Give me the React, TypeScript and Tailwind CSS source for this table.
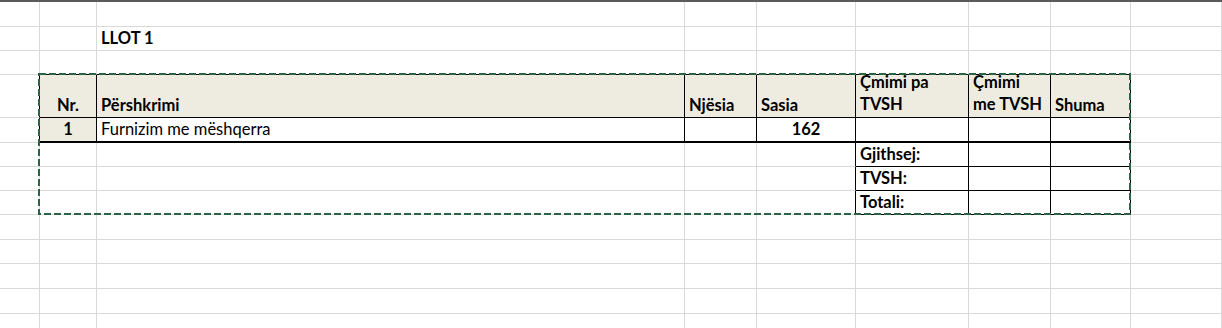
import React from "react";

// Column widths of the sheet (A..I); the last column fills the rest.
const COLS = [40, 57, 588, 72, 99, 113, 82, 80];
// Row heights below the dark strip at the top.
const ROWS = [25, 24, 24, 43, 25, 24, 24, 24, 25, 24, 25, 25, 25];

type Cell = { text?: React.ReactNode; bold?: boolean; align?: "left" | "center" | "right" };

const content: Record<string, Cell> = {
  "1-2": { text: "LLOT 1", bold: true },
  "3-1": { text: "Nr.", bold: true, align: "center" },
  "3-2": { text: "Përshkrimi", bold: true },
  "3-3": { text: "Njësia", bold: true },
  "3-4": { text: "Sasia", bold: true },
  "3-5": {
    text: (
      <span className="flex flex-col leading-[22px]">
        <span>Çmimi pa</span>
        <span>TVSH</span>
      </span>
    ),
    bold: true,
  },
  "3-6": {
    text: (
      <span className="flex flex-col leading-[22px]">
        <span>Çmimi</span>
        <span>me TVSH</span>
      </span>
    ),
    bold: true,
  },
  "3-7": { text: "Shuma", bold: true },
  "4-1": { text: "1", bold: true, align: "center" },
  "4-2": { text: "Furnizim me mëshqerra" },
  "4-4": { text: "162", bold: true, align: "center" },
  "5-5": { text: "Gjithsej:", bold: true },
  "6-5": { text: "TVSH:", bold: true },
  "7-5": { text: "Totali:", bold: true },
};

function rightBorder(r: number, c: number) {
  if ((r === 3 || r === 4) && c >= 0 && c <= 7) return "border-r-black";
  if (r >= 5 && r <= 7 && c >= 4 && c <= 7) return "border-r-black";
  return "border-r-[#d9d9d9]";
}

function bottomBorder(r: number, c: number) {
  if (r === 4 && c >= 1 && c <= 7) return "border-b-2 border-b-black";
  if ((r === 2 || r === 3) && c >= 1 && c <= 7) return "border-b border-b-black";
  if (r >= 5 && r <= 7 && c >= 5 && c <= 7) return "border-b border-b-black";
  return "border-b border-b-[#d9d9d9]";
}

function fill(r: number, c: number) {
  if (r === 3 && c >= 1 && c <= 7) return "bg-[#eeece1]";
  if (r === 4 && c === 1) return "bg-[#eeece1]";
  return "bg-white";
}

export default function App() {
  return (
    <div
      className="relative h-[328px] w-[1222px] overflow-hidden bg-white text-[16.5px] text-black"
      style={{ fontFamily: "Lato, 'Liberation Sans', sans-serif" }}
    >
      <div className="h-[2px] bg-[#5a5a5a]" />
      {ROWS.map((h, r) => (
        <div key={r} className="flex" style={{ height: h }}>
          {[...COLS, 0].map((w, c) => {
            const cell = content[`${r}-${c}`];
            const just =
              cell?.align === "center" ? "justify-center" : cell?.align === "right" ? "justify-end" : "justify-start";
            return (
              <div
                key={c}
                className={`flex items-end overflow-visible whitespace-nowrap border-r px-[4px] pb-[2px] leading-[20px] ${just} ${rightBorder(
                  r,
                  c
                )} ${bottomBorder(r, c)} ${fill(r, c)} ${cell?.bold ? "font-bold" : "font-normal"} ${
                  c === 8 ? "flex-1" : "shrink-0"
                }`}
                style={c === 8 ? undefined : { width: w }}
              >
                {cell?.text}
              </div>
            );
          })}
        </div>
      ))}

      {/* Copy marquee around the table range */}
      <svg className="pointer-events-none absolute left-0 top-0" width="1222" height="328">
        <rect
          x="39"
          y="74"
          width="1091"
          height="140"
          fill="none"
          stroke="#2a6444"
          strokeWidth="2"
          strokeDasharray="7 3"
        />
      </svg>
    </div>
  );
}
